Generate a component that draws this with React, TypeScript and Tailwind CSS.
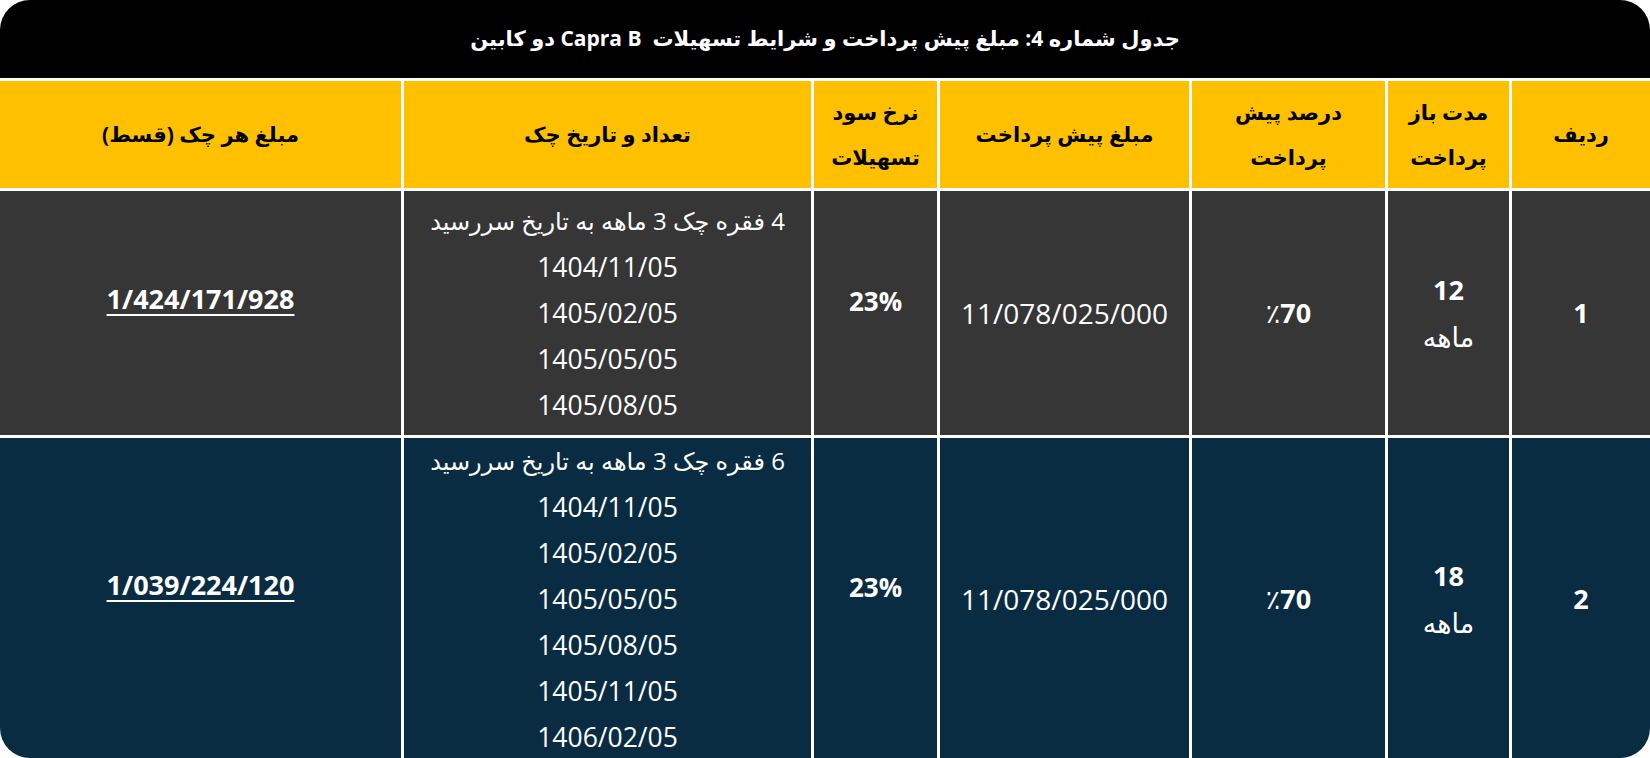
import React from "react";

const rows = [
  {
    id: "1",
    months: "12",
    bg: "bg-[#363636]",
    checks: "4 فقره چک 3 ماهه به تاریخ سررسید",
    dates: ["1404/11/05", "1405/02/05", "1405/05/05", "1405/08/05"],
    amount: "1/424/171/928",
  },
  {
    id: "2",
    months: "18",
    bg: "bg-[#0a2c42]",
    checks: "6 فقره چک 3 ماهه به تاریخ سررسید",
    dates: ["1404/11/05", "1405/02/05", "1405/05/05", "1405/08/05", "1405/11/05", "1406/02/05"],
    amount: "1/039/224/120",
  },
];

function Head({ lines }: { lines: string[] }) {
  return (
    <div className="flex flex-col items-center justify-center bg-[#ffc000] text-center text-[21px] font-bold leading-[45px] text-black">
      {lines.map((l) => (
        <span key={l}>{l}</span>
      ))}
    </div>
  );
}

export default function App() {
  return (
    <div className="h-[758px] w-[1650px] bg-white font-['Open_Sans','DejaVu_Sans',sans-serif]">
      <div
        dir="rtl"
        className="grid h-full grid-cols-[138px_121px_193px_249px_123px_407px_401px] grid-rows-[78px_107px_244px_1fr] gap-[3px] overflow-hidden rounded-[30px] bg-white"
      >
        <div className="col-span-7 flex items-center justify-center bg-black text-[21px] font-bold text-white">
          جدول شماره 4: مبلغ پیش پرداخت و شرایط تسهیلات&nbsp; Capra B دو کابین
        </div>

        <Head lines={["ردیف"]} />
        <Head lines={["مدت باز", "پرداخت"]} />
        <Head lines={["درصد  پیش", "پرداخت"]} />
        <Head lines={["مبلغ پیش پرداخت"]} />
        <Head lines={["نرخ سود", "تسهیلات"]} />
        <Head lines={["تعداد و تاریخ چک"]} />
        <Head lines={["مبلغ هر چک (قسط)"]} />

        {rows.map((r) => (
          <div key={r.id} className="contents text-white">
            <div className={`${r.bg} flex items-center justify-center text-[27px] font-bold`}>{r.id}</div>
            <div className={`${r.bg} flex flex-col items-center justify-center leading-[47px]`}>
              <span className="text-[27px] font-bold">{r.months}</span>
              <span className="text-[27px]">ماهه</span>
            </div>
            <div className={`${r.bg} flex items-center justify-center text-[27px]`}>
              <span dir="ltr">
                <span className="font-normal">٪</span>
                <span className="font-bold">70</span>
              </span>
            </div>
            <div className={`${r.bg} flex items-center justify-center text-[28px]`}>11/078/025/000</div>
            <div className={`${r.bg} flex items-center justify-center pb-6 text-[26px] font-bold`}>23%</div>
            <div className={`${r.bg} flex flex-col items-center justify-center text-[26.5px] leading-[46px]`}>
              <span className="text-[24px]">{r.checks}</span>
              {r.dates.map((d) => (
                <span key={d}>{d}</span>
              ))}
            </div>
            <div className={`${r.bg} flex items-center justify-center pb-7`}>
              <span className="text-[27px] font-bold underline decoration-2 underline-offset-[5px]">{r.amount}</span>
            </div>
          </div>
        ))}
      </div>
    </div>
  );
}
